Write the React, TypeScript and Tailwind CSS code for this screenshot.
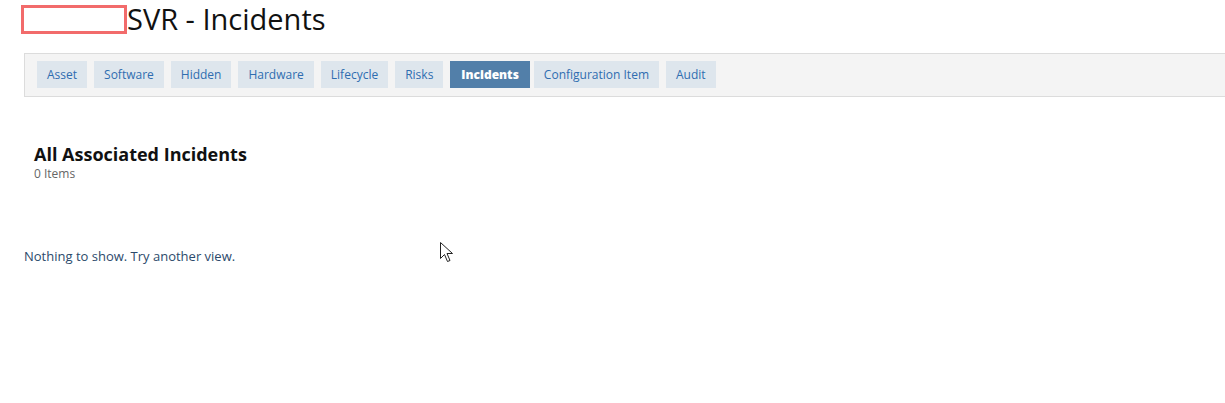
import React from "react";

const tabs = [
  "Asset",
  "Software",
  "Hidden",
  "Hardware",
  "Lifecycle",
  "Risks",
  "Incidents",
  "Configuration Item",
  "Audit",
];

export default function App() {
  return (
    <div
      className="relative w-[1225px] h-[403px] bg-white overflow-hidden"
      style={{ fontFamily: '"Open Sans", sans-serif' }}
    >
      <div className="flex items-center pl-[21px] pt-[5px] h-[33px]">
        <div className="w-[106px] h-[29px] border-[3px] border-[#f26b6b] shrink-0" />
        <h1 className="text-[29px] leading-[28px] text-[#111]">SVR - Incidents</h1>
      </div>

      <div className="ml-[24px] mt-[20px] h-[44px] bg-[#f4f4f4] border border-r-0 border-[#dcdcdc] flex items-start pt-[7px] pl-[12px] gap-[7px]">
        {tabs.map((t) => (
          <div
            key={t}
            className={
              t === "Incidents"
                ? "h-[27px] px-[11px] mr-[-3px] flex items-center text-[12px] font-extrabold text-white bg-[#527fa9]"
                : "h-[27px] px-[10px] flex items-center text-[12px] text-[#2f6db0] bg-[#dee6ed]"
            }
          >
            {t}
          </div>
        ))}
      </div>

      <div className="pl-[34px] pt-[46px]">
        <div className="text-[18px] font-bold leading-[22px] text-[#111]">All Associated Incidents</div>
        <div className="text-[12px] leading-[16px] text-[#666] mt-[1px]">0 Items</div>
      </div>

      <div className="pl-[24px] pt-[65px] text-[13px] leading-[18px] text-[#2c4a6b]">
        Nothing to show. Try another view.
      </div>

      <svg
        className="absolute left-[440px] top-[242px]"
        width="14"
        height="22"
        viewBox="0 0 14 22"
      >
        <path
          d="M0.5 0.5 L0.5 16.5 L4.5 12.5 L7.5 19.5 L10 18.5 L7 11.5 L12.5 11.5 Z"
          fill="white"
          stroke="#222"
          strokeWidth="1"
          strokeLinejoin="miter"
        />
      </svg>
    </div>
  );
}
